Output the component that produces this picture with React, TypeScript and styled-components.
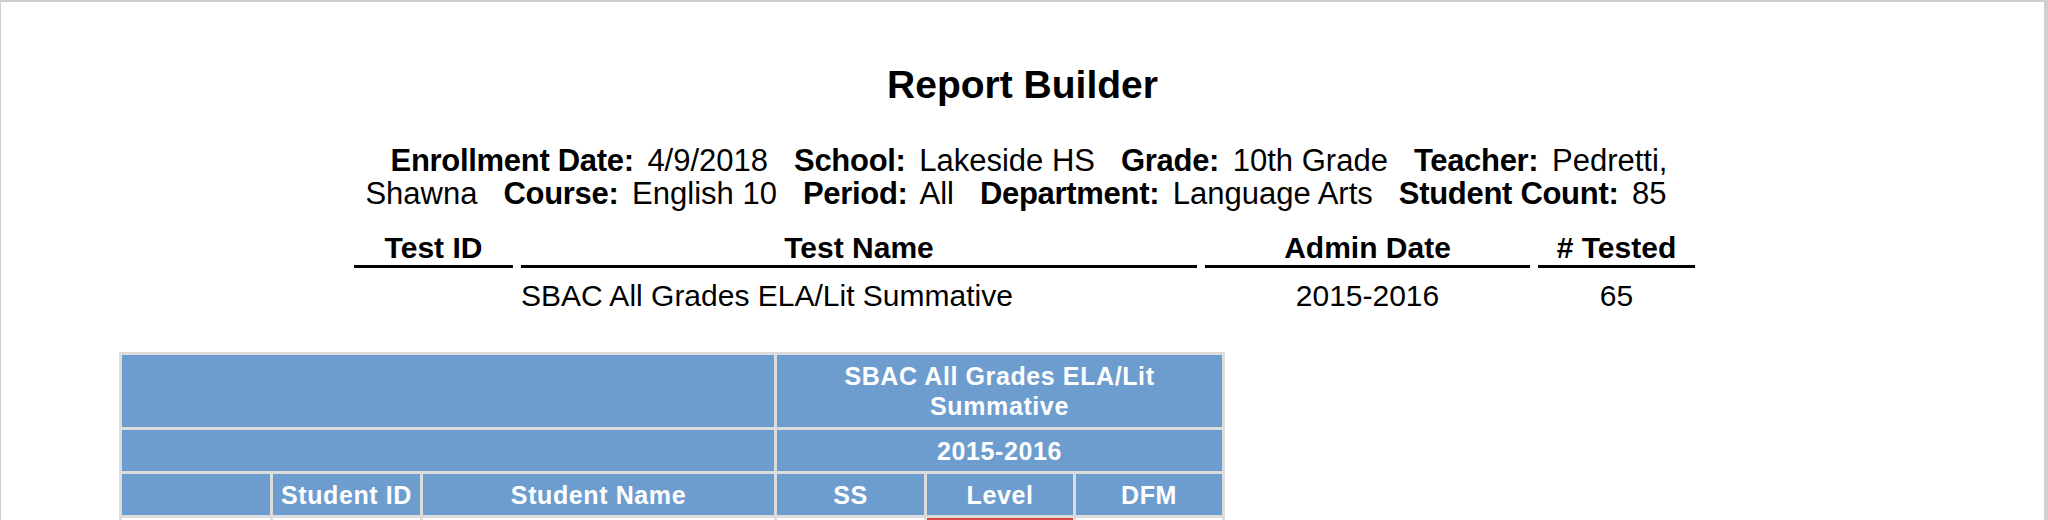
import styled, { createGlobalStyle } from 'styled-components';

const GlobalStyle = createGlobalStyle`
  html, body {
    margin: 0;
    padding: 0;
    overflow: hidden;
    background: #cfcfcf;
  }
`;

const Page = styled.div`
  margin: 2px 4px 0 1px;
  height: 518px;
  overflow: hidden;
  background: #ffffff;
  color: #000;
  font-family: "Liberation Sans", Arial, Helvetica, sans-serif;
`;

const Title = styled.h1`
  margin: 60px 0 0;
  font-size: 39px;
  line-height: 45px;
  font-weight: 700;
  text-align: center;
`;

const Info = styled.div`
  width: 1330px;
  margin: 37px auto 0;
  font-size: 31px;
  line-height: 33px;
  text-align: center;
`;

const Field = styled.span`
  margin: 0 13px;
`;

const Label = styled.b`
  font-weight: 700;
  letter-spacing: -0.3px;
  margin-right: 5px;
`;

const TestTable = styled.table`
  margin: 21px 0 0 345px;
  border-collapse: separate;
  border-spacing: 8px 0;
  font-size: 30px;
  line-height: 34px;
`;

const TestHead = styled.th<{ $w: number }>`
  width: ${(p) => p.$w}px;
  padding: 0;
  font-weight: 700;
  text-align: center;
  border-bottom: 3px solid #000;
`;

const TestCell = styled.td<{ $align?: string }>`
  padding: 11px 0 0;
  text-align: ${(p) => p.$align || 'center'};
`;

const GridWrap = styled.div`
  margin: 39px 0 0 118px;
`;

const Grid = styled.table`
  border-collapse: separate;
  border-spacing: 3px;
  background: #dcdcdc;
  font-size: 25px;
  letter-spacing: 0.6px;
`;

const HeadCell = styled.th<{ $w?: number; $h: number }>`
  ${(p) => (p.$w ? `width: ${p.$w}px;` : '')}
  height: ${(p) => p.$h}px;
  padding: 0 20px;
  background: #6d9dcf;
  color: #fff;
  font-weight: 700;
  line-height: 30px;
  text-align: center;
  vertical-align: middle;
  &.tight {
    padding: 0;
  }
`;

const DataCell = styled.td<{ $flag?: boolean }>`
  height: 36px;
  padding: 0;
  background: ${(p) => (p.$flag ? '#d9463e' : '#ffffff')};
`;

const fields: [string, string][] = [
  ['Enrollment Date:', '4/9/2018'],
  ['School:', 'Lakeside HS'],
  ['Grade:', '10th Grade'],
  ['Teacher:', 'Pedretti, Shawna'],
  ['Course:', 'English 10'],
  ['Period:', 'All'],
  ['Department:', 'Language Arts'],
  ['Student Count:', '85'],
];

const testCols = [
  { name: 'Test ID', w: 159 },
  { name: 'Test Name', w: 676 },
  { name: 'Admin Date', w: 325 },
  { name: '# Tested', w: 157 },
];

export default function App() {
  return (
    <>
      <GlobalStyle />
      <Page>
        <Title>Report Builder</Title>
        <Info>
          {fields.map(([label, value]) => (
            <Field key={label}>
              <Label>{label}</Label> {value}
            </Field>
          ))}
        </Info>

        <TestTable>
          <thead>
            <tr>
              {testCols.map((c) => (
                <TestHead key={c.name} $w={c.w}>{c.name}</TestHead>
              ))}
            </tr>
          </thead>
          <tbody>
            <tr>
              <TestCell></TestCell>
              <TestCell $align="left">SBAC All Grades ELA/Lit Summative</TestCell>
              <TestCell>2015-2016</TestCell>
              <TestCell>65</TestCell>
            </tr>
          </tbody>
        </TestTable>

        <GridWrap>
          <Grid>
            <thead>
              <tr>
                <HeadCell colSpan={3} $h={72}></HeadCell>
                <HeadCell colSpan={3} $h={72}>SBAC All Grades ELA/Lit Summative</HeadCell>
              </tr>
              <tr>
                <HeadCell colSpan={3} $h={41}></HeadCell>
                <HeadCell colSpan={3} $h={41}>2015-2016</HeadCell>
              </tr>
              <tr>
                <HeadCell className="tight" $w={148} $h={41}></HeadCell>
                <HeadCell className="tight" $w={147} $h={41}>Student ID</HeadCell>
                <HeadCell className="tight" $w={351} $h={41}>Student Name</HeadCell>
                <HeadCell className="tight" $w={147} $h={41}>SS</HeadCell>
                <HeadCell className="tight" $w={146} $h={41}>Level</HeadCell>
                <HeadCell className="tight" $w={146} $h={41}>DFM</HeadCell>
              </tr>
            </thead>
            <tbody>
              <tr>
                <DataCell />
                <DataCell />
                <DataCell />
                <DataCell />
                <DataCell $flag />
                <DataCell />
              </tr>
            </tbody>
          </Grid>
        </GridWrap>
      </Page>
    </>
  );
}
